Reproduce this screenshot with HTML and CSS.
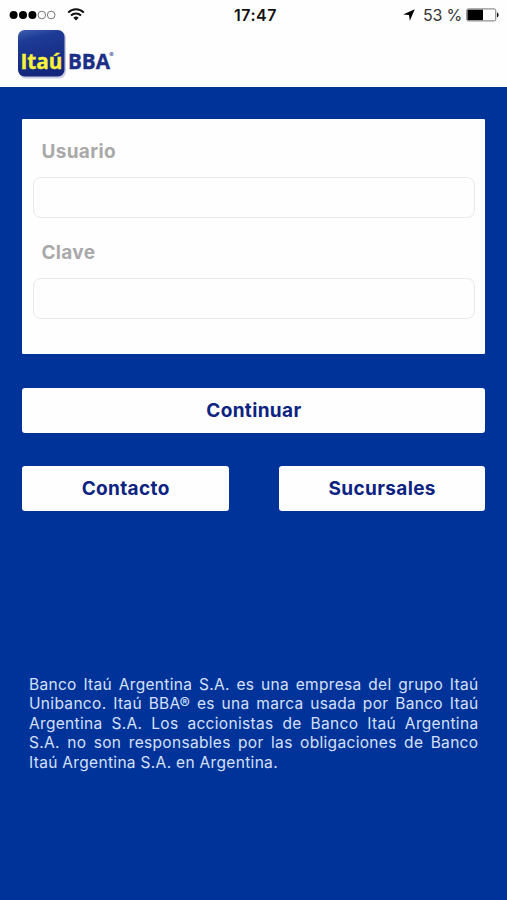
FILE: index.html
```html
<!DOCTYPE html>
<html lang="es">
<head>
    <meta charset="UTF-8">
    <meta name="viewport" content="width=device-width, initial-scale=1">
    <title>Itaú BBA</title>
    <link rel="stylesheet" href="styles.css">
</head>
<body>
    <header class="header">
        <div class="status-bar">
            <div class="status-left">
                <svg class="signal" width="48" height="10" viewBox="0 0 48 10">
                    <circle cx="4.6" cy="5" r="4"/>
                    <circle cx="14" cy="5" r="4"/>
                    <circle cx="23.4" cy="5" r="4"/>
                    <circle class="off" cx="32.8" cy="5" r="3.8"/>
                    <circle class="off" cx="42.2" cy="5" r="3.8"/>
                </svg>
                <svg class="wifi" width="18" height="13" viewBox="0 0 18 13">
                    <path d="M1.2 4.6a11 11 0 0 1 15.6 0M4 7.5a7 7 0 0 1 10 0"/>
                    <path class="dot" d="M9 12.4L6.3 9.7a3.9 3.9 0 0 1 5.4 0z"/>
                </svg>
            </div>
            <div class="time">17:47</div>
            <div class="status-right">
                <svg class="arrow" width="12" height="12" viewBox="0 0 12 12">
                    <path d="M11.8.2L6.8 11.8L6 6L.2 5.6z"/>
                </svg>
                <span class="percent">53 %</span>
                <svg class="battery" width="34" height="14" viewBox="0 0 34 14">
                    <rect class="shell" x=".75" y=".9" width="29" height="12" rx="1.6"/>
                    <rect x="1.5" y="1.7" width="15.5" height="10.4"/>
                    <path d="M31 4.5c2 .5 2 4.3 0 4.8z"/>
                </svg>
            </div>
        </div>
        <svg class="logo" width="104" height="52" viewBox="0 0 104 52">
            <defs>
                <linearGradient id="tile" x1="0" y1="0" x2="0.25" y2="1">
                    <stop offset="0" stop-color="#3f60b0"/>
                    <stop offset="0.25" stop-color="#1d3b96"/>
                    <stop offset="1" stop-color="#14267c"/>
                </linearGradient>
            </defs>
            <rect class="logo-shadow" x="4" y="2" width="47" height="47.5" rx="7"/>
            <rect x="3" y="1" width="46.5" height="46.5" rx="6.5" fill="url(#tile)"/>
            <text class="logo-itau" x="5.5" y="39.5" textLength="42" lengthAdjust="spacingAndGlyphs">Itaú</text>
            <text class="logo-bba" x="53" y="39.5" textLength="42" lengthAdjust="spacingAndGlyphs">BBA</text>
            <text class="logo-reg" x="94.2" y="27.5">®</text>
        </svg>
    </header>

    <main class="content">
        <form class="login-form" id="loginForm">
            <div class="card">
                <label for="usuario">Usuario</label>
                <input type="text" id="usuario" name="usuario">
                <label for="clave">Clave</label>
                <input type="password" id="clave" name="clave">
            </div>
            <button type="submit" class="btn btn-main">Continuar</button>
        </form>
        <div class="button-group">
            <button type="button" class="btn">Contacto</button>
            <button type="button" class="btn">Sucursales</button>
        </div>
        <p class="legal">Banco Itaú Argentina S.A. es una empresa del grupo Itaú Unibanco. Itaú BBA® es una marca usada por Banco Itaú Argentina S.A. Los accionistas de Banco Itaú Argentina S.A. no son responsables por las obligaciones de Banco Itaú Argentina S.A. en Argentina.</p>
    </main>
</body>
</html>
```

FILE: styles.css
```css
* {
    box-sizing: border-box;
}
body {
    margin: 0;
    min-height: 900px;
    font-family: Inter, "Liberation Sans", sans-serif;
    background-color: #003399;
}
.header {
    height: 87px;
    background-color: #fefefe;
}
.status-bar {
    display: grid;
    grid-template-columns: 1fr auto 1fr;
    align-items: center;
    height: 29px;
    padding: 0 7px 0 9px;
    color: #111;
}
.status-left, .status-right {
    display: flex;
    align-items: center;
}
.status-right {
    justify-content: flex-end;
}
.signal .off {
    fill: none;
    stroke: #777;
    stroke-width: 1;
}
.wifi {
    margin-left: 10px;
}
.wifi path {
    fill: none;
    stroke: #111;
    stroke-width: 2;
}
.wifi .dot {
    fill: #111;
    stroke: none;
}
.time {
    padding-left: 2px;
    font-size: 16px;
    font-weight: 600;
    letter-spacing: 0.5px;
}
.arrow {
    margin-right: 8px;
}
.percent {
    font-size: 16px;
    letter-spacing: -0.2px;
    color: #333;
    margin-right: 4px;
}
.battery .shell {
    fill: #fff;
    stroke: #777;
    stroke-width: 1;
}
.logo {
    display: block;
    margin-left: 15px;
}
.logo-shadow {
    fill: #c9cce2;
}
.logo-itau, .logo-bba {
    font-family: "Open Sans", sans-serif;
    font-size: 22px;
    font-weight: 700;
    stroke-width: 0.4;
}
.logo-itau {
    fill: #f8f23c;
    stroke: #f8f23c;
}
.logo-bba {
    fill: #1b2f86;
    stroke: #1b2f86;
}
.logo-reg {
    font-size: 6.5px;
    fill: #1b2f86;
}
.content {
    padding: 32.4px 21.6px 0 22.4px;
}
.card {
    height: 234.6px;
    padding: 18px 10.5px 0;
    background-color: #fefefe;
    border-radius: 1px;
}
label {
    display: block;
    height: 40px;
    padding-left: 8.5px;
    line-height: 30px;
    font-size: 19px;
    font-weight: 700;
    letter-spacing: 0.35px;
    color: #a9a9a9;
}
input {
    display: block;
    width: 100%;
    height: 41px;
    margin-bottom: 20px;
    padding: 0 10px;
    border: 1.5px solid #e9e9e9;
    border-radius: 8px;
    background-color: #fefefe;
    font: inherit;
}
.btn {
    width: 206.5px;
    height: 45px;
    padding: 0;
    border: none;
    border-radius: 3px;
    background-color: #fefefe;
    color: #0d2381;
    font-family: inherit;
    font-size: 19px;
    font-weight: 700;
    letter-spacing: 0.35px;
    cursor: pointer;
}
.btn-main {
    display: block;
    width: 100%;
    margin-top: 34px;
}
.button-group {
    display: flex;
    justify-content: space-between;
    margin-top: 32.8px;
}
.legal {
    margin: 164.2px 7px 0 6.6px;
    font-size: 15.5px;
    line-height: 19.4px;
    letter-spacing: 0.32px;
    text-align: justify;
    color: #d5e0fa;
}
```
